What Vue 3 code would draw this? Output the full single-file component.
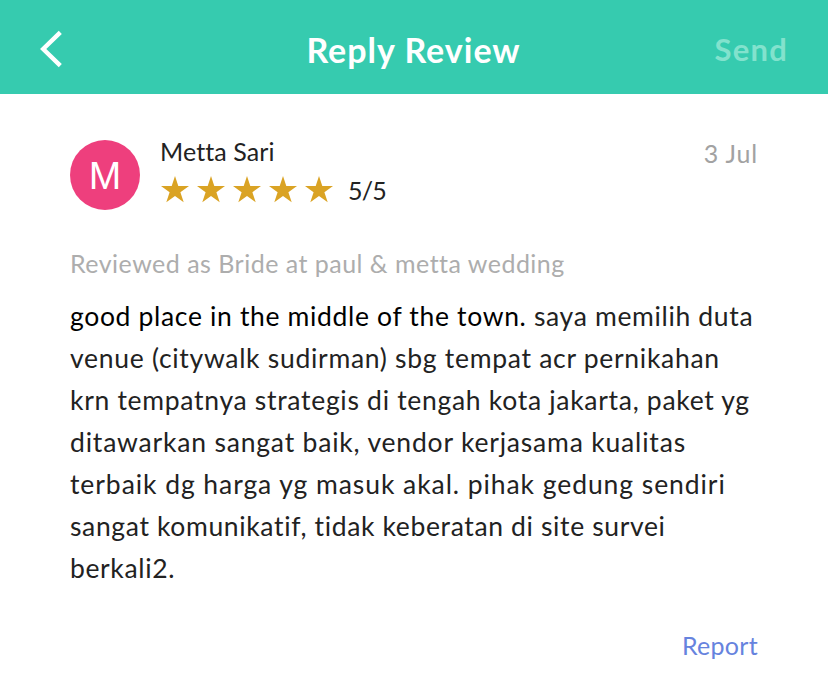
<script setup>
import { ref } from 'vue';

const review = ref({
  name: 'Metta Sari',
  initial: 'M',
  date: '3 Jul',
  rating: 5,
  context: 'Reviewed as Bride at paul & metta wedding'
});

// Review body, one entry per line with its tracking in px
const lines = [
  { lead: 'good place in the middle of the town.', text: ' saya memilih duta', tracking: 0.66 },
  { text: 'venue (citywalk sudirman) sbg tempat acr pernikahan', tracking: 0.71 },
  { text: 'krn tempatnya strategis di tengah kota jakarta, paket yg', tracking: 0.7 },
  { text: 'ditawarkan sangat baik, vendor kerjasama kualitas', tracking: 0.81 },
  { text: 'terbaik dg harga yg masuk akal. pihak gedung sendiri', tracking: 0.93 },
  { text: 'sangat komunikatif, tidak keberatan di site survei', tracking: 0.64 },
  { text: 'berkali2.', tracking: 0.63 }
];
</script>

<template>
  <div class="page">
    <header class="navbar">
      <button class="back" aria-label="Back">
        <svg width="24" height="38" viewBox="0 0 24 38">
          <path d="M21.3 2.4 L4.2 19 L21.3 35.6" fill="none" stroke="#fff" stroke-width="4.4" />
        </svg>
      </button>
      <h1 class="title">Reply Review</h1>
      <button class="send" disabled>Send</button>
    </header>

    <main class="review">
      <div class="author">
        <div class="avatar">{{ review.initial }}</div>
        <div class="info">
          <div class="name">{{ review.name }}</div>
          <div class="rating">
            <svg v-for="n in review.rating" :key="n" class="star" viewBox="0 0 28 27">
              <path d="M14 0 L17.3 10 H28 L19.4 16.2 L22.7 26.3 L14 20.1 L5.3 26.3 L8.6 16.2 L0 10 H10.7 Z" />
            </svg>
            <span class="score">{{ review.rating }}/5</span>
          </div>
        </div>
        <div class="date">{{ review.date }}</div>
      </div>

      <p class="context">{{ review.context }}</p>

      <div class="body">
        <div v-for="(line, i) in lines" :key="i" class="line" :style="{ letterSpacing: line.tracking + 'px' }">
          <span v-if="line.lead" class="lead">{{ line.lead }}</span>{{ line.text }}
        </div>
      </div>

      <a class="report">Report</a>
    </main>
  </div>
</template>

<style>
body {
  background: #fff;
}
</style>

<style scoped>
.page {
  height: 685px;
  overflow: hidden;
  background: #fff;
  color: #222;
  font-family: Lato, "Liberation Sans", sans-serif;
  font-variant-ligatures: none;
}
.navbar {
  display: grid;
  grid-template-columns: 1fr auto 1fr;
  align-items: center;
  height: 94px;
  padding: 0 40px 0 39px;
  box-sizing: border-box;
  background: #36cbaf;
}
button {
  padding: 0;
  border: none;
  background: none;
  font-family: inherit;
}
.back {
  justify-self: start;
  display: flex;
  padding-top: 4px;
}
.title {
  margin: 0;
  padding-top: 6px;
  color: #fff;
  font-size: 34px;
  line-height: 44px;
  font-weight: 700;
  letter-spacing: 1px;
}
.send {
  justify-self: end;
  padding-top: 4px;
  color: #82e2cd;
  font-size: 31px;
  line-height: 40px;
  font-weight: 700;
  letter-spacing: 1.2px;
}
.review {
  display: flex;
  flex-direction: column;
  padding: 41px 70px 0;
}
.author {
  display: flex;
}
.avatar {
  width: 70px;
  height: 70px;
  margin-top: 5px;
  border-radius: 50%;
  background: #ee3f7d;
  color: #fff;
  font-family: "Liberation Sans", sans-serif;
  font-size: 39px;
  line-height: 72px;
  text-align: center;
}
.info {
  flex: 1;
  margin-left: 20px;
}
.name {
  font-size: 25px;
  line-height: 32px;
  letter-spacing: 0.1px;
}
.rating {
  display: flex;
  align-items: center;
  gap: 8px;
  height: 45px;
  padding-left: 1px;
}
.star {
  width: 28px;
  height: 27px;
  fill: #daa324;
}
.score {
  margin-left: 7px;
  font-size: 25px;
  letter-spacing: -0.8px;
}
.date {
  color: #a2a2a2;
  font-size: 25px;
  line-height: 36px;
  letter-spacing: 0.8px;
}
.context {
  margin: 33px 0 0;
  color: #adadad;
  font-size: 25px;
  line-height: 36px;
  letter-spacing: 0.48px;
  white-space: nowrap;
}
.body {
  margin-top: 14px;
}
.line {
  font-size: 26.5px;
  line-height: 42px;
  white-space: nowrap;
}
.lead {
  color: #000;
}
.report {
  align-self: flex-end;
  margin-top: 38px;
  color: #6683de;
  font-size: 25px;
  line-height: 36px;
  letter-spacing: 0.3px;
}
</style>
